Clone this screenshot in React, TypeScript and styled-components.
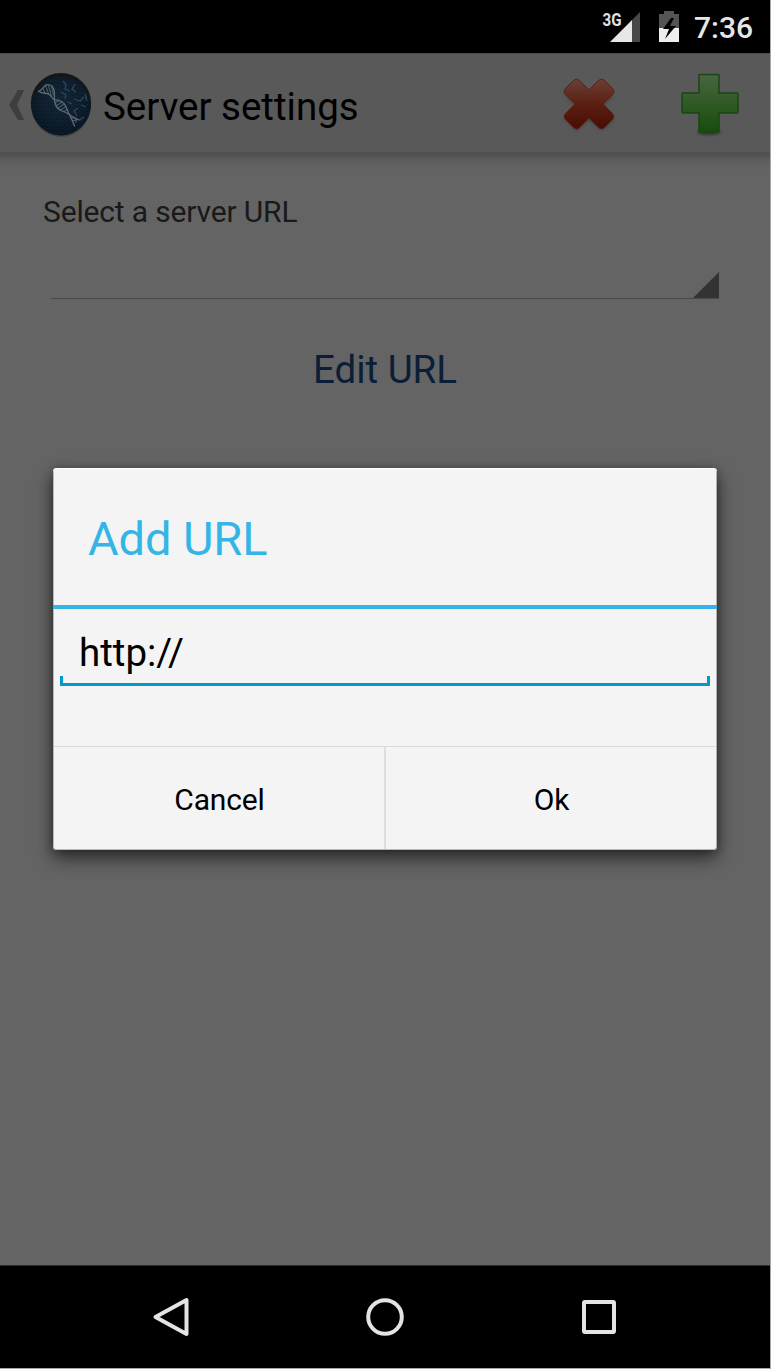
import React from "react";
import styled, { createGlobalStyle } from "styled-components";

const GlobalStyle = createGlobalStyle`
  * { box-sizing: border-box; }
  html, body { margin: 0; padding: 0; background: #a8a8a8; }
  body { font-family: Roboto, "Liberation Sans", sans-serif; }
  button, input { font-family: inherit; border: 0; padding: 0; margin: 0; background: none; border-radius: 0; outline: 0; }
`;

const Phone = styled.div`
  position: relative;
  width: 770px;
  height: 1368px;
  display: flex;
  flex-direction: column;
  background: #646464;
  overflow: hidden;
`;

const StatusBar = styled.header`
  height: 53px;
  flex: none;
  background: #000;
  display: flex;
  justify-content: flex-end;
  align-items: flex-start;
  padding: 9px 17px 0 0;
`;

const SignalIcon = styled.svg`
  width: 40px;
  height: 36px;
  margin-right: 16px;
`;

const BatteryIcon = styled.svg`
  width: 22px;
  height: 36px;
  margin-right: 14px;
`;

const Clock = styled.span`
  margin-top: 1px;
  font-size: 30px;
  line-height: 36px;
  font-weight: 500;
  color: #e6e6e6;
`;

const ActionBar = styled.div`
  height: 99px;
  flex: none;
  display: flex;
  align-items: center;
  background: #595959;
  border-top: 1px solid #4c4c4c;
`;

const BackMark = styled.svg`
  width: 16px;
  height: 32px;
  margin-left: 9px;
  margin-top: 3px;
`;

const AppLogo = styled.svg`
  width: 62px;
  height: 66px;
  margin-left: 5px;
  margin-top: 3px;
`;

const Title = styled.h1`
  margin: 8px 0 0 11px;
  flex: 1;
  font-size: 38.5px;
  line-height: 46px;
  font-weight: 400;
  color: #000;
`;

const Action = styled.button<{ $gap: number }>`
  display: flex;
  width: 64px;
  height: 68px;
  margin-top: 2px;
  margin-right: ${(p) => p.$gap}px;
`;

const BarShadow = styled.div`
  height: 18px;
  flex: none;
  background: linear-gradient(#505050 0, #535353 5px, #5b5b5b 6px, #606060 12px, #646464 18px);
`;

const Form = styled.main`
  flex: 1;
  display: flex;
  flex-direction: column;
  padding: 24px 51px 0;
`;

const Label = styled.label`
  margin-left: -8px;
  font-size: 30px;
  line-height: 36px;
  letter-spacing: -0.16px;
  color: #191919;
`;

const Spinner = styled.div`
  height: 69px;
  display: flex;
  justify-content: flex-end;
  align-items: flex-end;
  border-bottom: 1px solid #494949;
`;

const SpinnerMark = styled.svg`
  width: 26px;
  height: 26px;
`;

const EditLink = styled.button`
  align-self: center;
  margin-top: 48px;
  font-size: 38.5px;
  line-height: 46px;
  color: #0b1e38;
`;

const NavBar = styled.nav`
  height: 103px;
  flex: none;
  display: flex;
  justify-content: center;
  align-items: center;
  gap: 174px;
  background: #000;
  border-top: 1px solid #303030;
`;

const NavIcon = styled.svg`
  width: 40px;
  height: 40px;
  fill: none;
  stroke: #e4e4e4;
  stroke-width: 4;
  stroke-linejoin: round;
`;

const Dialog = styled.section`
  position: absolute;
  left: 53px;
  top: 468px;
  width: 664px;
  height: 382px;
  display: flex;
  flex-direction: column;
  background: #f4f4f4;
  border-radius: 4px;
  box-shadow: 0 8px 18px rgba(0, 0, 0, 0.58), 0 1px 10px rgba(0, 0, 0, 0.25),
    inset 0 1px 0 #fff, inset 1px 0 0 #b9b9b9, inset -1px 0 0 #b0b0b0, inset 0 -1px 0 #b9b9b9;
`;

const DialogTitle = styled.h2`
  margin: 0;
  height: 141px;
  padding: 43px 35px 0;
  border-bottom: 4px solid #33b5e5;
  font-size: 47px;
  line-height: 56px;
  font-weight: 400;
  letter-spacing: -0.1px;
  color: #33b5e5;
`;

const Field = styled.div`
  display: flex;
  flex-direction: column;
  margin: 16px 7px 60px;
`;

const FieldInput = styled.input`
  width: 100%;
  height: 51px;
  padding: 3px 19px 0;
  font-size: 38.5px;
  line-height: 46px;
  color: #000;
`;

const FieldLine = styled.div`
  height: 10px;
  border: solid #0099cc;
  border-width: 0 3px 3px;
`;

const Buttons = styled.div`
  flex: 1;
  display: grid;
  grid-template-columns: 332px 1fr;
  margin: 0 1px 1px;
  border-top: 1px solid #dadada;
`;

const DialogButton = styled.button<{ $divided?: boolean }>`
  font-size: 30px;
  line-height: 36px;
  letter-spacing: -0.15px;
  padding: 4px 0 0 1px;
  color: #000;
  border-right: ${(p) => (p.$divided ? "2px solid #dedede" : "0")};
`;

function Logo() {
  return (
    <AppLogo viewBox="0 0 62 66">
      <defs>
        <radialGradient id="sphere" cx="0.5" cy="0.4" r="0.6">
          <stop offset="0" stopColor="#122433" />
          <stop offset="0.65" stopColor="#0c1b29" />
          <stop offset="1" stopColor="#07131e" />
        </radialGradient>
        <pattern id="scan" width="5" height="4" patternUnits="userSpaceOnUse">
          <path d="M0 1h4M4 3h1" stroke="#183348" strokeWidth="0.7" opacity="0.5" />
        </pattern>
        <filter id="glow"><feGaussianBlur stdDeviation="0.7" /></filter>
      </defs>
      <ellipse cx="31" cy="34" rx="30" ry="31" fill="#484848" />
      <ellipse cx="31" cy="31.5" rx="30.2" ry="30.5" fill="#161616" />
      <ellipse cx="31" cy="34" rx="29.3" ry="29.5" fill="url(#sphere)" />
      <ellipse cx="31" cy="34" rx="29.3" ry="29.5" fill="url(#scan)" />
      <g fill="none" stroke="#36566c" strokeWidth="1.3" opacity="0.75" filter="url(#glow)">
        <path d="M33 9l3 4-1 4 5 2M45 12l-3 5 4 3M31 20l5 3-1 4M44 27l6 2 4-4M48 36l-4 3 3 5M55 22l2 7M51 33l5 2M38 30l4 2M54 45l-4 3" />
      </g>
      <g fill="none" stroke="#5d6c72" strokeLinecap="round">
        <path strokeWidth="1.3" d="M8.700 19.300C13 18.500 13.500 12 18 12.700C24 13 25 19 24.300 27.700C25 33 26.500 37 31 38.500C35 40 36 40.500 39.300 42.500L44 45.500 49.300 48" />
        <path strokeWidth="1.300" d="M8.700 19.300C13 22.500 17 20 20 23C22 25 22.500 26.500 24.300 27.700C29 28 33 29 35.500 34C37 37 38 40 39.300 42.500L42 48 44.500 54" />
        <path strokeWidth="0.900" d="M13 16.500l2 4.500M15.500 13.500l3 8M18.500 13l3 11.500M21.500 14l2 9M25 31l4-2.500M26 34l6-4M27.500 36.500l7-4.500M30.500 38l5.500-3.500M34 39.500l3.500-2M41 46l4 0M42.500 49l5-1.500M46 46.500l0 4" />
      </g>
    </AppLogo>
  );
}

export default function App() {
  return (
    <>
      <GlobalStyle />
      <Phone>
        <StatusBar>
          <SignalIcon viewBox="0 0 40 36">
            <text x="0.5" y="16.5" fontFamily="Roboto" fontSize="18" fontWeight="700" fill="#e0e0e0" textLength="19" lengthAdjust="spacingAndGlyphs">3G</text>
            <path d="M38 3V33H30V11z" fill="#484848" />
            <path d="M30 11V33H8z" fill="#e6e6e6" />
          </SignalIcon>
          <BatteryIcon viewBox="0 0 22 36">
            <path d="M1 5h5V2h10v3h5v14H1z" fill="#545454" />
            <path d="M1 19h20v14H1z" fill="#eee" />
            <path d="M13 9L5 20h6L7 30l11-13h-6l4-8z" fill="#000" />
          </BatteryIcon>
          <Clock>7:36</Clock>
        </StatusBar>
        <ActionBar>
          <BackMark viewBox="0 0 16 32">
            <path d="M9 1h6L8 16l7 15H9L0 16z" fill="#3e3e3e" />
          </BackMark>
          <Logo />
          <Title>Server settings</Title>
          <Action $gap={56} aria-label="Delete">
            <svg width="64" height="68" viewBox="0 0 64 68">
              <defs>
                <linearGradient id="red" x1="0" y1="0" x2="0" y2="1">
                  <stop offset="0" stopColor="#6a4034" />
                  <stop offset="0.5" stopColor="#5b2012" />
                  <stop offset="1" stopColor="#480c04" />
                </linearGradient>
                <filter id="soft" x="-20%" y="-20%" width="140%" height="150%"><feGaussianBlur stdDeviation="1.5" /></filter>
              </defs>
              <path d="M20 9L32 21 44 9Q47 9 56 21 57 24 46 34L57 46Q57 48 46 58 43 59 32 48L20 59Q17 58 8 47 7 45 18 34L7 22Q8 18 20 9z" transform="translate(0 2)" fill="#333" opacity="0.6" filter="url(#soft)" />
              <path d="M16.500 10.500Q19.500 7.500 22.500 10.500L32 20 41.500 10.500Q44.500 7.500 47.500 10.500L55.500 18.500Q58.500 21.500 55.500 24.500L46 34 55.500 43.500Q58.500 46.500 55.500 49.500L47.500 57.500Q44.500 60.500 41.500 57.500L32 48 22.500 57.500Q19.500 60.500 16.500 57.500L8.500 49.500Q5.500 46.500 8.500 43.500L18 34 8.500 24.500Q5.500 21.500 8.500 18.500z" fill="url(#red)" stroke="#5c1e12" strokeWidth="1" />
            </svg>
          </Action>
          <Action $gap={29} aria-label="Add">
            <svg width="64" height="68" viewBox="0 0 64 68">
              <defs>
                <linearGradient id="green" x1="0" y1="0" x2="0" y2="1">
                  <stop offset="0" stopColor="#4a6542" />
                  <stop offset="0.5" stopColor="#315926" />
                  <stop offset="1" stopColor="#184d0e" />
                </linearGradient>
              </defs>
              <ellipse cx="32" cy="62" rx="12" ry="3" fill="#303030" filter="url(#soft)" />
              <path d="M23 4.500H41Q42 4.500 42 5.500V23H60Q61 23 61 24V42Q61 43 60 43H42V61Q42 62 41 62H23Q22 62 22 61V43H6Q5 43 5 42V24Q5 23 6 23H22V5.500Q22 4.500 23 4.500z" fill="url(#green)" stroke="#184711" strokeWidth="1.500" />
            </svg>
          </Action>
        </ActionBar>
        <BarShadow />
        <Form>
          <Label>Select a server URL</Label>
          <Spinner>
            <SpinnerMark viewBox="0 0 26 26"><path d="M26 0V26H0z" fill="#333" /></SpinnerMark>
          </Spinner>
          <EditLink>Edit URL</EditLink>
        </Form>
        <NavBar>
          <NavIcon viewBox="0 0 40 40"><path d="M35.500 3V37L4.500 20z" /></NavIcon>
          <NavIcon viewBox="0 0 40 40"><circle cx="20" cy="20" r="16.800" /></NavIcon>
          <NavIcon viewBox="0 0 40 40"><rect x="5" y="5" width="30" height="30" rx="1" /></NavIcon>
        </NavBar>
        <Dialog role="dialog">
          <DialogTitle>Add URL</DialogTitle>
          <Field>
            <FieldInput defaultValue="http://" />
            <FieldLine />
          </Field>
          <Buttons>
            <DialogButton $divided>Cancel</DialogButton>
            <DialogButton>Ok</DialogButton>
          </Buttons>
        </Dialog>
      </Phone>
    </>
  );
}
